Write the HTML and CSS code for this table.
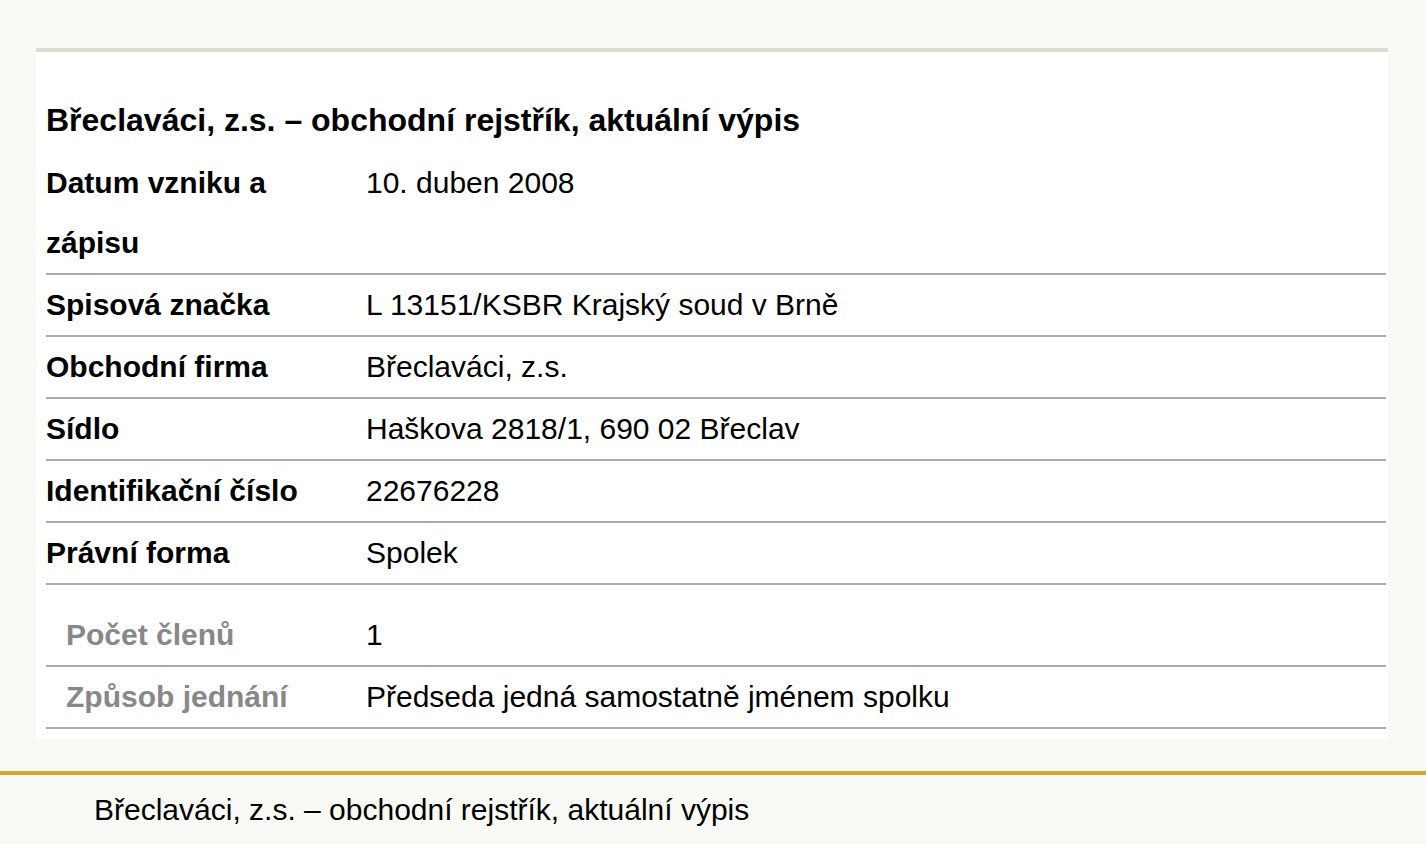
FILE: index.html
```html
<!DOCTYPE html>
<html lang="cs">
<head>
<meta charset="utf-8">
<title>Břeclaváci, z.s. – obchodní rejstřík, aktuální výpis</title>
<link rel="stylesheet" href="styles.css">
</head>
<body>
<main class="page">
  <section class="card">
    <h2 class="card-title">Břeclaváci, z.s. – obchodní rejstřík, aktuální výpis</h2>
    <table class="reg">
      <tbody>
        <tr><th>Datum vzniku a zápisu</th><td>10. duben 2008</td></tr>
        <tr><th>Spisová značka</th><td>L 13151/KSBR Krajský soud v Brně</td></tr>
        <tr><th>Obchodní firma</th><td>Břeclaváci, z.s.</td></tr>
        <tr><th>Sídlo</th><td>Haškova 2818/1, 690 02 Břeclav</td></tr>
        <tr><th>Identifikační číslo</th><td>22676228</td></tr>
        <tr><th>Právní forma</th><td>Spolek</td></tr>
      </tbody>
    </table>
    <table class="reg sub">
      <tbody>
        <tr><th>Počet členů</th><td>1</td></tr>
        <tr><th>Způsob jednání</th><td>Předseda jedná samostatně jménem spolku</td></tr>
      </tbody>
    </table>
  </section>
</main>
<footer class="footer">
  <p class="footer-text">Břeclaváci, z.s. – obchodní rejstřík, aktuální výpis</p>
</footer>
</body>
</html>
```

FILE: styles.css
```css
html, body {
  margin: 0;
  padding: 0;
}
body {
  background: #f9f9f5;
  font-family: "Liberation Sans", Arial, sans-serif;
  color: #000;
}
.page {
  padding: 48px 38px 0 36px;
}
.card {
  background: #fff;
  border-top: 4px solid #dcdcd2;
  padding: 38px 2px 10px 10px;
}
.card-title {
  margin: 0 0 3px 0;
  font-size: 32px;
  line-height: 60px;
  font-weight: bold;
}
.reg {
  width: 100%;
  border-collapse: collapse;
  font-size: 30px;
  line-height: 60px;
}
.reg th,
.reg td {
  padding: 0;
  text-align: left;
  vertical-align: top;
  border-bottom: 2px solid #aaaaaa;
}
.reg th {
  width: 320px;
  font-weight: bold;
}
.reg td {
  font-weight: normal;
}
.sub {
  margin-top: 20px;
}
.sub th {
  color: #888888;
  padding-left: 20px;
  width: 300px;
}
.footer {
  margin-top: 32px;
  border-top: 4px solid #d6a526;
}
.footer-text {
  margin: 0;
  padding: 0 0 0 94px;
  font-size: 30px;
  line-height: 70px;
}
```
